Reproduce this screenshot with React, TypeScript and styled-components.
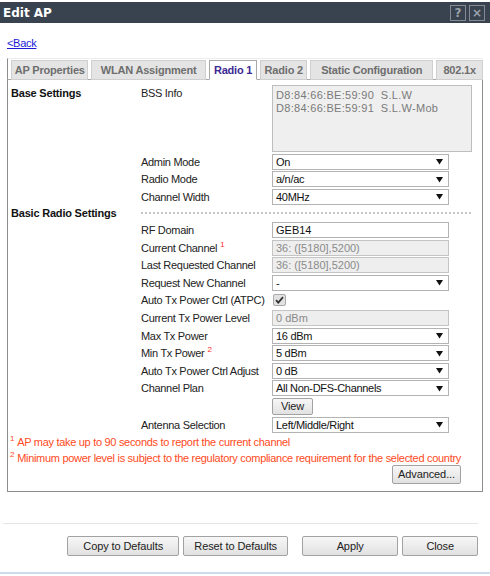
import React from "react";
import styled, { createGlobalStyle } from "styled-components";

const GlobalStyle = createGlobalStyle`
  html, body {
    margin: 0;
    padding: 0;
    background: #ffffff;
  }
  body {
    font-family: "Liberation Sans", Arial, sans-serif;
    font-size: 11px;
    letter-spacing: -0.3px;
    color: #222;
  }
`;

const Page = styled.div`
  width: 490px;
  height: 576px;
  padding-top: 2px;
  box-sizing: border-box;
  display: flex;
  flex-direction: column;
  background: #fff;
`;

const TitleBar = styled.div`
  height: 21px;
  background: #39424f;
  display: flex;
  align-items: center;
  justify-content: space-between;
  padding: 0 5px 0 3px;
`;

const Title = styled.span`
  color: #fff;
  font-weight: bold;
  font-size: 12px;
  letter-spacing: 0;
  font-family: "DejaVu Sans", sans-serif;
`;

const TitleTools = styled.div`
  display: flex;
  gap: 3px;
`;

const ToolButton = styled.span`
  width: 14px;
  height: 14px;
  border: 1px solid #838a94;
  color: #9aa1aa;
  font-weight: bold;
  font-size: 12px;
  letter-spacing: 0;
  font-family: "DejaVu Sans", sans-serif;
  display: flex;
  align-items: center;
  justify-content: center;
  line-height: 1;
`;

const Body = styled.div`
  padding: 0 7px;
  display: flex;
  flex-direction: column;
`;

const BackLink = styled.a`
  margin-top: 14px;
  height: 13px;
  color: #1a1ad6;
  text-decoration: underline;
  align-self: flex-start;
  cursor: pointer;
`;

const TabStrip = styled.div`
  margin-top: 8px;
  display: flex;
  gap: 3px;
  padding: 1px 0 0 3px;
  width: 476px;
  box-sizing: border-box;
  border-top: 1px solid #ececec;
  border-left: 1px solid #8d8d8d;
  position: relative;
  z-index: 1;
`;

const Tab = styled.div<{ active?: boolean; w: number }>`
  width: ${(p) => p.w}px;
  height: 20px;
  box-sizing: border-box;
  display: flex;
  align-items: center;
  justify-content: center;
  font-weight: bold;
  font-size: 11px;
  white-space: nowrap;
  letter-spacing: -0.2px;
  border: 1px solid ${(p) => (p.active ? "#a8a8a8" : "#cfcfcf")};
  border-bottom: ${(p) => (p.active ? "1px solid #fff" : "1px solid #cfcfcf")};
  background: ${(p) => (p.active ? "#fff" : "#e4e4e4")};
  color: ${(p) => (p.active ? "#3c2a93" : "#6e6e6e")};
  margin-bottom: -1px;
`;

const Panel = styled.div`
  width: 476px;
  height: 413px;
  box-sizing: border-box;
  border: 1px solid #8d8d8d;
  border-top-color: #a8a8a8;
  padding: 5px 0 0 3px;
  display: flex;
  flex-direction: column;
`;

const Form = styled.div`
  display: grid;
  grid-template-columns: 130px 131px 1fr;
  row-gap: 1.6px;
  align-items: center;
`;

const Section = styled.div`
  font-weight: bold;
  color: #111;
  grid-column: 1;
  min-height: 14px;
  display: flex;
  align-items: center;
  letter-spacing: -0.2px;
`;

const TopSection = styled(Section)`
  align-self: start;
  padding-top: 1px;
`;

const Label = styled.div`
  grid-column: 2;
  color: #222;
  white-space: nowrap;
`;

const TopLabel = styled(Label)`
  align-self: start;
  padding-top: 2px;
`;

const Sup = styled.sup`
  color: #ff2a1a;
  font-size: 8px;
  vertical-align: top;
  position: relative;
  top: -2px;
  margin-left: 3px;
`;

const Control = styled.div`
  grid-column: 3;
  display: flex;
  align-items: center;
  min-height: 16px;
`;

const BssBox = styled.div`
  width: 200px;
  height: 67px;
  box-sizing: border-box;
  border: 1px solid #bdbdbd;
  background: #efefef;
  color: #7a7a7a;
  padding: 3px 3px;
  line-height: 13px;
  letter-spacing: 0.3px;
  white-space: pre;
`;

const Select = styled.div`
  width: 177px;
  height: 16px;
  box-sizing: border-box;
  border: 1px solid #b3b3b3;
  background: #fff;
  display: flex;
  align-items: center;
  justify-content: space-between;
  padding: 0 5px 0 3px;
  color: #111;
`;

const Input = styled.div<{ disabled?: boolean }>`
  width: 177px;
  height: 16px;
  box-sizing: border-box;
  border: 1px solid ${(p) => (p.disabled ? "#c4c4c4" : "#b3b3b3")};
  background: ${(p) => (p.disabled ? "#eeeeee" : "#fff")};
  color: ${(p) => (p.disabled ? "#8a8a8a" : "#111")};
  display: flex;
  align-items: center;
  padding: 0 3px;
  letter-spacing: 0;
`;

const Check = styled.div`
  width: 13px;
  height: 12px;
  margin-left: 1px;
  box-sizing: border-box;
  border: 1px solid #a9a9a9;
  border-radius: 2px;
  background: #e2e2e2;
  display: flex;
  align-items: center;
  justify-content: center;
`;

const Divider = styled.div`
  grid-column: 2 / 4;
  height: 0;
  border-top: 2px dotted #c6c6c6;
  width: 330px;
`;

const Button = styled.button<{ w: number }>`
  width: ${(p) => p.w}px;
  height: 20px;
  box-sizing: border-box;
  border: 1px solid #a2a2a2;
  border-radius: 2px;
  background: linear-gradient(#f7f7f7, #e1e1e1);
  font-family: "Liberation Sans", Arial, sans-serif;
  font-size: 11px;
  letter-spacing: -0.1px;
  color: #222;
  padding: 0;
  cursor: pointer;
`;

const SmallButton = styled(Button)`
  height: 17px;
`;

const AdvancedButton = styled(Button)`
  height: 19px;
`;

const Notes = styled.div`
  margin-top: 1px;
  margin-left: -1px;
  color: #ff4a22;
  line-height: 16px;
  white-space: nowrap;
`;

const NoteSup = styled.sup`
  font-size: 8px;
  vertical-align: top;
  position: relative;
  top: -3px;
  margin-right: 3px;
`;

const AdvancedRow = styled.div`
  display: flex;
  justify-content: flex-end;
  padding-right: 21px;
  margin-top: -1px;
`;

const Footer = styled.div`
  margin-top: 31px;
  border-top: 1px solid #e5e5e5;
  margin-left: 3px;
  width: 475px;
`;

const FooterButtons = styled.div`
  display: flex;
  gap: 4px;
  padding: 12px 0 0 64px;
`;

const GapButton = styled(Button)`
  margin-left: 10px;
`;

const BottomLine = styled.div`
  margin-top: 16px;
  border-top: 2px solid #cddcec;
`;

const Arrow = () => (
  <svg width="7" height="7" viewBox="0 0 7 7">
    <path d="M0 1 L7 1 L3.5 6.5 Z" fill="#111" />
  </svg>
);

const Tick = () => (
  <svg width="9" height="8" viewBox="0 0 9 8">
    <path d="M1 4.2 L3.3 6.6 L8 1.2" stroke="#333" strokeWidth="1.8" fill="none" />
  </svg>
);

const Drop: React.FC<{ value: string }> = ({ value }) => (
  <Select>
    <span>{value}</span>
    <Arrow />
  </Select>
);

const tabs = [
  { name: "AP Properties", w: 78 },
  { name: "WLAN Assignment", w: 115 },
  { name: "Radio 1", w: 49, active: true },
  { name: "Radio 2", w: 47 },
  { name: "Static Configuration", w: 124 },
  { name: "802.1x", w: 47 },
];

export default function App() {
  return (
    <>
      <GlobalStyle />
      <Page>
        <TitleBar>
          <Title>Edit AP</Title>
          <TitleTools>
            <ToolButton>?</ToolButton>
            <ToolButton>×</ToolButton>
          </TitleTools>
        </TitleBar>
        <Body>
          <BackLink>&lt;Back</BackLink>
          <TabStrip>
            {tabs.map((t) => (
              <Tab key={t.name} w={t.w} active={t.active}>
                {t.name}
              </Tab>
            ))}
          </TabStrip>
          <Panel>
            <Form>
              <TopSection>Base Settings</TopSection>
              <TopLabel>BSS Info</TopLabel>
              <Control>
                <BssBox>{"D8:84:66:BE:59:90  S.L.W\nD8:84:66:BE:59:91  S.L.W-Mob"}</BssBox>
              </Control>

              <Label>Admin Mode</Label>
              <Control><Drop value="On" /></Control>
              <Label>Radio Mode</Label>
              <Control><Drop value="a/n/ac" /></Control>
              <Label>Channel Width</Label>
              <Control><Drop value="40MHz" /></Control>

              <Section>Basic Radio Settings</Section>
              <Divider />

              <Label>RF Domain</Label>
              <Control><Input>GEB14</Input></Control>
              <Label>Current Channel<Sup>1</Sup></Label>
              <Control><Input disabled>36: ([5180],5200)</Input></Control>
              <Label>Last Requested Channel</Label>
              <Control><Input disabled>36: ([5180],5200)</Input></Control>
              <Label>Request New Channel</Label>
              <Control><Drop value="-" /></Control>
              <Label>Auto Tx Power Ctrl (ATPC)</Label>
              <Control><Check><Tick /></Check></Control>
              <Label>Current Tx Power Level</Label>
              <Control><Input disabled>0 dBm</Input></Control>
              <Label>Max Tx Power</Label>
              <Control><Drop value="16 dBm" /></Control>
              <Label>Min Tx Power<Sup>2</Sup></Label>
              <Control><Drop value="5 dBm" /></Control>
              <Label>Auto Tx Power Ctrl Adjust</Label>
              <Control><Drop value="0 dB" /></Control>
              <Label>Channel Plan</Label>
              <Control><Drop value="All Non-DFS-Channels" /></Control>
              <Control><SmallButton w={41}>View</SmallButton></Control>
              <Label>Antenna Selection</Label>
              <Control><Drop value="Left/Middle/Right" /></Control>
            </Form>
            <Notes>
              <div><NoteSup>1</NoteSup>AP may take up to 90 seconds to report the current channel</div>
              <div><NoteSup>2</NoteSup>Minimum power level is subject to the regulatory compliance requirement for the selected country</div>
            </Notes>
            <AdvancedRow>
              <AdvancedButton w={69}>Advanced...</AdvancedButton>
            </AdvancedRow>
          </Panel>
        </Body>
        <Footer>
          <FooterButtons>
            <Button w={113}>Copy to Defaults</Button>
            <Button w={105}>Reset to Defaults</Button>
            <GapButton w={97}>Apply</GapButton>
            <Button w={76}>Close</Button>
          </FooterButtons>
        </Footer>
        <BottomLine />
      </Page>
    </>
  );
}
